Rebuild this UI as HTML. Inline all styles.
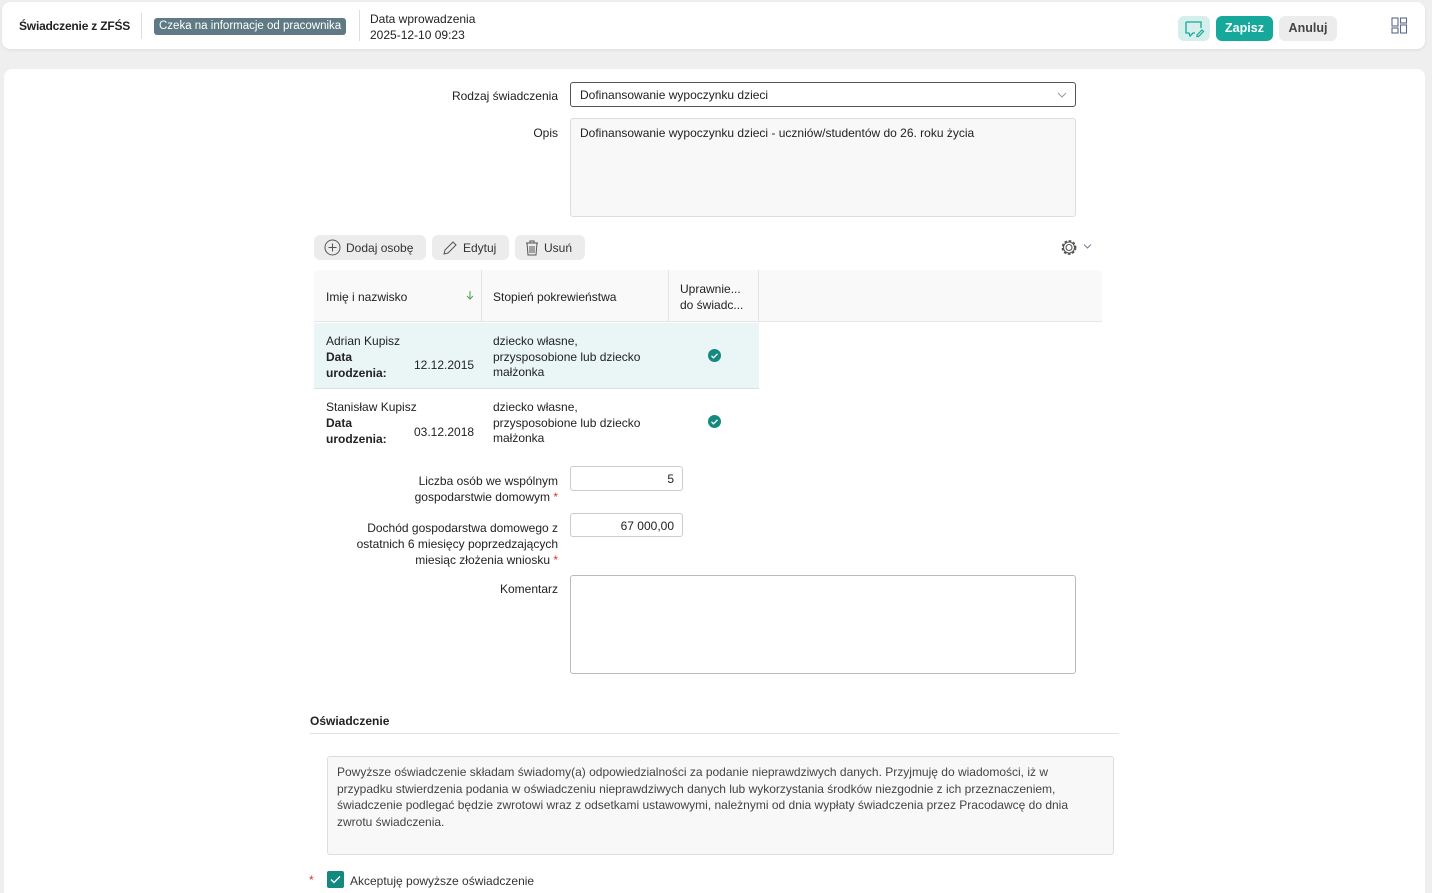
<!DOCTYPE html>
<html><head><meta charset="utf-8"><style>
*{box-sizing:border-box;margin:0;padding:0}
html,body{width:1432px;height:893px;overflow:hidden}
body{background:#efefef;font-family:"Liberation Sans",sans-serif;font-size:12px;color:#222;position:relative}
.abs{position:absolute}
.top{left:2px;top:2px;width:1423px;height:47px;background:#fff;border-radius:8px;box-shadow:0 1px 3px rgba(0,0,0,.08)}
.main{left:4px;top:69px;width:1421px;height:840px;background:#fff;border-radius:8px}
.lbl{text-align:right;font-size:12px;color:#222}
.inp{border:1px solid #ccc;border-radius:3px;background:#fff}
.btn{background:#ececec;border-radius:6px;height:25px;font-size:12px;color:#333;display:flex;align-items:center;gap:5px;padding:0 10px}
.cell{font-size:12px}
b{font-weight:bold}
</style></head><body>
<div class="abs top"></div>
<div class="abs" style="left:19px;top:19px;font-weight:bold;font-size:12px;letter-spacing:-0.2px">Świadczenie z ZFŚS</div>
<div class="abs" style="left:141px;top:13px;width:1px;height:26px;background:#ddd"></div>
<div class="abs" style="left:154px;top:18px;background:#5f7a84;color:#fff;border-radius:3px;padding:1px 5px;font-size:11.5px;line-height:15px">Czeka na informacje od pracownika</div>
<div class="abs" style="left:359px;top:10px;width:1px;height:31px;background:#ddd"></div>
<div class="abs" style="left:370px;top:11px;line-height:16px;font-size:12px">Data wprowadzenia<br>2025-12-10 09:23</div>
<div class="abs" style="left:1178px;top:16px;width:32px;height:25px;background:#d6efec;border-radius:6px"><svg width="32" height="25" viewBox="0 0 32 25"><path d="M8 6h15v6M8 6v11h3l1 3 3-3h2" fill="none" stroke="#16a89a" stroke-width="1.3"/><path d="M19 19l5-5 1.5 1.5-5 5h-1.5z" fill="none" stroke="#16a89a" stroke-width="1.2"/></svg></div>
<div class="abs" style="left:1216px;top:16px;width:57px;height:25px;background:#16a89a;border-radius:6px;color:#fff;font-weight:bold;font-size:12.5px;text-align:center;line-height:25px">Zapisz</div>
<div class="abs" style="left:1279px;top:16px;width:58px;height:25px;background:#ececec;border-radius:6px;color:#444;font-weight:bold;font-size:12.5px;text-align:center;line-height:25px">Anuluj</div>
<svg class="abs" style="left:1391px;top:17px" width="17" height="17" viewBox="0 0 17 17" fill="none" stroke="#5a6a8a" stroke-width="1.1"><rect x="1" y="1" width="6" height="8"/><rect x="1" y="11" width="6" height="5"/><rect x="9.5" y="1" width="6" height="5"/><rect x="9.5" y="8" width="6" height="8"/></svg>

<div class="abs main"></div>
<div class="abs lbl" style="left:400px;top:89px;width:158px">Rodzaj świadczenia</div>
<div class="abs inp" style="left:570px;top:82px;width:506px;height:25px;border-color:#555;padding:5px 9px">Dofinansowanie wypoczynku dzieci<svg style="position:absolute;right:8px;top:9px" width="10" height="6"><path d="M1 1l4 4 4-4" fill="none" stroke="#999"/></svg></div>
<div class="abs lbl" style="left:400px;top:126px;width:158px">Opis</div>
<div class="abs inp" style="left:570px;top:118px;width:506px;height:99px;background:#f8f8f8;border-color:#ddd;padding:7px 9px">Dofinansowanie wypoczynku dzieci - uczniów/studentów do 26. roku życia</div>

<div class="abs btn" style="left:314px;top:235px;width:112px"><svg width="17" height="17"><circle cx="8.5" cy="8.5" r="7.5" fill="none" stroke="#555"/><path d="M8.5 4.5v8M4.5 8.5h8" stroke="#555"/></svg>Dodaj osobę</div>
<div class="abs btn" style="left:432px;top:235px;width:77px"><svg width="16" height="16"><path d="M2 14l1-4 8-8 3 3-8 8z" fill="none" stroke="#555"/></svg>Edytuj</div>
<div class="abs btn" style="left:515px;top:235px;width:70px"><svg width="14" height="16"><path d="M1 3h12M5 3V1h4v2M2 3l1 12h8l1-12M5 6v7M7 6v7M9 6v7" fill="none" stroke="#555"/></svg>Usuń</div>
<svg class="abs" style="left:1060px;top:238px" width="34" height="19"><circle cx="9" cy="9.5" r="3" fill="none" stroke="#555" stroke-width="1.1"/><circle cx="9" cy="9.5" r="6.5" fill="none" stroke="#555" stroke-width="1.8" stroke-dasharray="2.6 1.7"/><circle cx="9" cy="9.5" r="5.5" fill="none" stroke="#555" stroke-width="1"/><path d="M24 6.5l3.5 3.5 3.5-3.5" fill="none" stroke="#6a7aa0"/></svg>

<div class="abs" style="left:314px;top:270px;width:788px;height:52px;background:#f9f9f9;border-radius:6px 6px 0 0;border-bottom:1px solid #e6e6e6"></div>
<div class="abs" style="left:481px;top:270px;width:1px;height:52px;background:#e4e4e4"></div>
<div class="abs" style="left:668px;top:270px;width:1px;height:52px;background:#e4e4e4"></div>
<div class="abs" style="left:758px;top:270px;width:1px;height:52px;background:#e4e4e4"></div>
<div class="abs cell" style="left:326px;top:290px">Imię i nazwisko</div>
<svg class="abs" style="left:465px;top:290px" width="10" height="10"><path d="M5 1v8M2 6l3 3 3-3" fill="none" stroke="#5aa55a" stroke-width="1.1"/></svg>
<div class="abs cell" style="left:493px;top:290px">Stopień pokrewieństwa</div>
<div class="abs cell" style="left:680px;top:281px;line-height:16px">Uprawnie...<br>do świadc...</div>

<div class="abs" style="left:314px;top:323px;width:445px;height:66px;background:#eaf5f5;border-bottom:1px solid #dde"></div>
<div class="abs cell" style="left:326px;top:333px;line-height:16px">Adrian Kupisz<br><b>Data<br>urodzenia:</b></div>
<div class="abs cell" style="left:414px;top:358px">12.12.2015</div>
<div class="abs cell" style="left:493px;top:334px;line-height:15.5px">dziecko własne,<br>przysposobione lub dziecko<br>małżonka</div>
<svg class="abs" style="left:708px;top:349px" width="13" height="13"><circle cx="6.5" cy="6.5" r="6.5" fill="#15897f"/><path d="M3.5 6.8l2 2 4-4" fill="none" stroke="#fff" stroke-width="1.3"/></svg>
<div class="abs cell" style="left:326px;top:399px;line-height:16px">Stanisław Kupisz<br><b>Data<br>urodzenia:</b></div>
<div class="abs cell" style="left:414px;top:425px">03.12.2018</div>
<div class="abs cell" style="left:493px;top:400px;line-height:15.5px">dziecko własne,<br>przysposobione lub dziecko<br>małżonka</div>
<svg class="abs" style="left:708px;top:415px" width="13" height="13"><circle cx="6.5" cy="6.5" r="6.5" fill="#15897f"/><path d="M3.5 6.8l2 2 4-4" fill="none" stroke="#fff" stroke-width="1.3"/></svg>

<div class="abs lbl" style="left:330px;top:473px;width:228px;line-height:16px">Liczba osób we wspólnym<br>gospodarstwie domowym <span style="color:#d33">*</span></div>
<div class="abs inp" style="left:570px;top:466px;width:113px;height:25px;text-align:right;padding:5px 8px">5</div>
<div class="abs lbl" style="left:300px;top:520px;width:258px;line-height:16px">Dochód gospodarstwa domowego z<br>ostatnich 6 miesięcy poprzedzających<br>miesiąc złożenia wniosku <span style="color:#d33">*</span></div>
<div class="abs inp" style="left:570px;top:513px;width:113px;height:24px;text-align:right;padding:5px 8px">67 000,00</div>
<div class="abs lbl" style="left:400px;top:582px;width:158px">Komentarz</div>
<div class="abs inp" style="left:570px;top:575px;width:506px;height:99px;border-color:#bbb"></div>

<div class="abs" style="left:310px;top:714px;font-weight:bold">Oświadczenie</div>
<div class="abs" style="left:310px;top:733px;width:809px;height:1px;background:#e2e2e2"></div>
<div class="abs" style="left:327px;top:756px;width:787px;height:99px;background:#f8f8f8;border:1px solid #ddd;border-radius:3px;padding:7px 30px 7px 9px;font-size:12px;line-height:16.5px;color:#444">Powyższe oświadczenie składam świadomy(a) odpowiedzialności za podanie nieprawdziwych danych. Przyjmuję do wiadomości, iż w przypadku stwierdzenia podania w oświadczeniu nieprawdziwych danych lub wykorzystania środków niezgodnie z ich przeznaczeniem, świadczenie podlegać będzie zwrotowi wraz z odsetkami ustawowymi, należnymi od dnia wypłaty świadczenia przez Pracodawcę do dnia zwrotu świadczenia.</div>
<div class="abs" style="left:309px;top:873px;color:#d33">*</div>
<div class="abs" style="left:327px;top:871px;width:17px;height:17px;background:#15897f;border-radius:2px"><svg width="17" height="17"><path d="M4 8.5l3 3 6-6" fill="none" stroke="#fff" stroke-width="1.3"/></svg></div>
<div class="abs" style="left:350px;top:874px;color:#333">Akceptuję powyższe oświadczenie</div>
</body></html>
